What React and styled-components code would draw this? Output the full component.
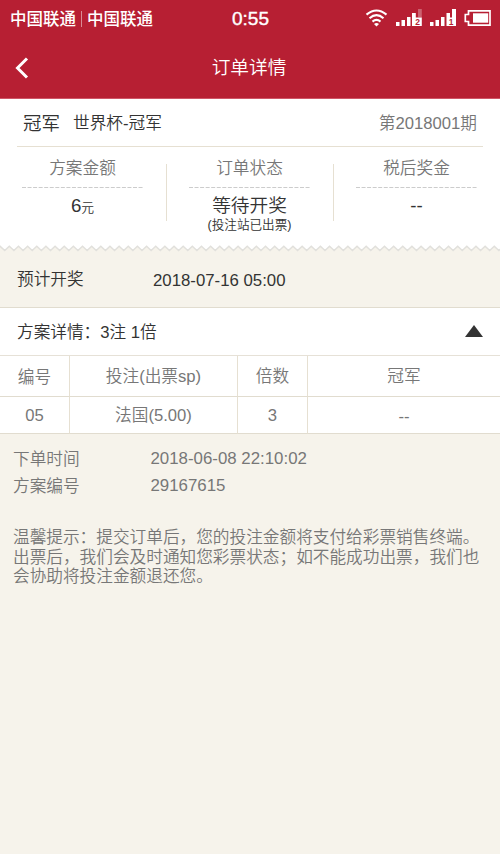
import React from 'react'
import styled, { createGlobalStyle } from 'styled-components';

const GlobalStyle = createGlobalStyle`
  * {
    box-sizing: border-box;
  }

  body {
    margin: 0;
    background: #f6f3eb;
    font-family: 'Liberation Sans', 'Noto Sans CJK SC', sans-serif;
    font-size: 16.67px;
    font-weight: 350;
    color: #333;
  }
`;

const Page = styled.div`
  width: 500px;
  height: 854px;
  overflow: hidden;
  background: #f6f3eb;
`;

const Header = styled.header`
  height: 99px;
  background: #b71f33;
  border-bottom: 1px solid #cf5567;
  color: #fff;
`;

const StatusBar = styled.div`
  display: grid;
  grid-template-columns: 1fr auto 1fr;
  align-items: center;
  height: 38px;
  padding: 0 9px 0 10px;
`;

const Carriers = styled.div`
  display: flex;
  align-items: center;
  font-size: 16.5px;
  font-weight: 500;
  line-height: 20px;
`;

const Carrier = styled.span`
  width: 66px;
  white-space: nowrap;
`;

const CarrierLine = styled.i`
  width: 1px;
  height: 16px;
  margin: 0 5px;
  background: #d98b96;
`;

const Clock = styled.div`
  font-size: 19px;
  line-height: 20px;
  -webkit-text-stroke: 0.4px #fff;
`;

const StatusIcons = styled.svg`
  justify-self: end;
  width: 126px;
  height: 38px;
`;

const NavBar = styled.nav`
  display: grid;
  grid-template-columns: 60px 1fr 60px;
  align-items: center;
  height: 60px;
`;

const BackIcon = styled.svg`
  width: 16px;
  height: 26px;
  margin-left: 14px;
`;

const Title = styled.h1`
  margin: 0 0 0 -2px;
  font-size: 18.7px;
  font-weight: 350;
  line-height: 24px;
  text-align: center;
`;

const Summary = styled.section`
  height: 146px;
  padding: 0 17px;
  background: #fff;
`;

const GameRow = styled.div`
  display: flex;
  align-items: center;
  height: 48px;
  padding: 0 6px 2px;
  border-bottom: 1px solid #e6e0d2;
`;

const GameName = styled.span`
  width: 50px;
  font-size: 18.5px;
`;

const GameType = styled.span`
  flex: 1;
`;

const Issue = styled.span`
  color: #777;
`;

const Stats = styled.div`
  display: grid;
  grid-template-columns: 150px 167px 149px;
  grid-template-rows: 57px;
  margin-top: 17px;
`;

const Stat = styled.div`
  padding: 0 ${props => props.$right || 23}px 0 ${props => props.$left || 0}px;
  border-right: ${props => props.$last ? '0' : '1px solid #e6e0d2'};
  text-align: center;
`;

const StatLabel = styled.div`
  height: 23px;
  margin: 0 -8px;
  color: #777;
  line-height: 9px;
`;

const StatDash = styled.svg`
  display: block;
  width: 121px;
  height: 1px;
`;

const StatValue = styled.div`
  height: 26px;
  margin: 0 -8px;
  padding-top: 6px;
  font-size: 18.7px;
  line-height: 24px;
  white-space: nowrap;
`;

const Unit = styled.small`
  font-size: 12.8px;
`;

const StatNote = styled.div`
  margin: 3px -8px 0;
  font-size: 12.6px;
  line-height: 16px;
  white-space: nowrap;
`;

const ZigZag = styled.svg`
  display: block;
  width: 500px;
  height: 7px;
`;

const DrawTime = styled.div`
  display: flex;
  align-items: center;
  height: 56px;
  padding-left: 17px;
  border-bottom: 1px solid #e1dccf;
`;

const DrawLabel = styled.span`
  width: 136px;
  padding-bottom: 3px;
`;

const DrawDate = styled.span`
  padding-top: 2px;
  font-size: 16.8px;
`;

const DetailBar = styled.div`
  display: flex;
  align-items: center;
  justify-content: space-between;
  height: 48px;
  padding: 0 17px 2px;
  border-bottom: 1px solid #e6e1d7;
  background: #fff;
`;

const Arrow = styled.svg`
  width: 18px;
  height: 12px;
`;

const BetTable = styled.div`
  display: grid;
  grid-template-columns: 70px 168px 70px 192px;
  grid-template-rows: 41px 37px;
  background: #fff;
  color: #777;
`;

const Cell = styled.div`
  display: flex;
  align-items: center;
  justify-content: center;
  padding-top: ${props => props.$drop || 0}px;
  padding-bottom: ${props => props.$lift || 0}px;
  border-right: ${props => props.$last ? '0' : '1px solid #e6e0d2'};
  border-bottom: 1px solid #e1dccf;
`;

const OrderInfo = styled.dl`
  display: grid;
  grid-template-columns: 137.500px 1fr;
  grid-auto-rows: 27px;
  align-items: center;
  margin: 11px 13px 0;
  color: #777;
`;

const Term = styled.dt`
  margin: 0;
  padding-bottom: 2px;
`;

const Info = styled.dd`
  margin: 0;
  font-size: 16.85px;
`;

const Tips = styled.p`
  margin: 29px 13px 0;
  color: #777;
  line-height: 19.5px;
  white-space: nowrap;
`;

const columns = [
    { name: '编号', drop: 0 },
    { name: '投注(出票sp)', lift: 3 },
    { name: '倍数', lift: 3 },
    { name: '冠军', lift: 3 },
];

const bet = [
    { value: '05', drop: 1 },
    { value: '法国(5.00)', lift: 3 },
    { value: '3', drop: 1 },
    { value: '--', drop: 3 },
];

function zigzagPoints() {
    const points = [];
    for (let x = -4.4; x < 510; x += 9.15) {
        points.push(`${x.toFixed(2)},5.5`);
        points.push(`${(x + 4.57).toFixed(2)},1.3`);
    }
    return points.join(' ');
}

function StatusGlyphs() {
    return (
        <StatusIcons viewBox="365 0 126 38" fill="#fff">
            <g fill="none" stroke="#fff" strokeWidth="2.1">
                <path d="M366.5 14.6 Q376.5 6.4 386.5 14.6" />
                <path d="M369.5 18.2 Q376.5 12 383.500 18.2" />
                <path d="M372.5 21.6 Q376.5 18 380.5 21.600" />
            </g>
            <path d="M374 24 Q376.5 22 379 24 L376.5 26.4Z" />
            <path d="M396 22h3.5v4H396zM401.500 20h3.5v6h-3.500zM407 17h3.500v9H407zM412 13h3.800v4.500h6V26H412z" />
            <path d="M418 9h3.800v8.500H418z" opacity="0.3" />
            <path d="M430 22h3.500v4H430zM435.500 20h3.500v6h-3.500zM441 17h3.500v9H441zM446.500 13h3.500v4.500h2V9h4v17h-9.500z" />
            <g fill="#b71f33" fontSize="8.5" fontWeight="bold" fontFamily="Liberation Sans, sans-serif">
                <text x="415.2" y="25.2">2</text>
                <text x="448.8" y="25.2">1</text>
            </g>
            <path d="M468.500 10.800H490v14.400H468.500V21.500H465.300v-7h3.200z" fill="none" stroke="#fff" strokeWidth="1.700" />
            <path d="M473 13.300h15.200v9.400H473z" />
        </StatusIcons>
    )
}

function Dash() {
    return (
        <StatDash>
            <path d="M0 0.5H121" stroke="#ccc" strokeDasharray="4 1.55" />
        </StatDash>
    )
}

function App() {
    return (
        <Page>
            <GlobalStyle />
            <Header>
                <StatusBar>
                    <Carriers>
                        <Carrier>中国联通</Carrier>
                        <CarrierLine />
                        <Carrier>中国联通</Carrier>
                    </Carriers>
                    <Clock>0:55</Clock>
                    <StatusGlyphs />
                </StatusBar>
                <NavBar>
                    <BackIcon viewBox="0 0 16 26">
                        <path d="M13 3.5 L3.500 13 L13 22.5" fill="none" stroke="#fff" strokeWidth="3" />
                    </BackIcon>
                    <Title>订单详情</Title>
                </NavBar>
            </Header>
            <Summary>
                <GameRow>
                    <GameName>冠军</GameName>
                    <GameType>世界杯-冠军</GameType>
                    <Issue>第2018001期</Issue>
                </GameRow>
                <Stats>
                    <Stat $left={5}>
                        <StatLabel>方案金额</StatLabel>
                        <Dash />
                        <StatValue>6<Unit>元</Unit></StatValue>
                    </Stat>
                    <Stat $left={22}>
                        <StatLabel>订单状态</StatLabel>
                        <Dash />
                        <StatValue>等待开奖</StatValue>
                        <StatNote>(投注站已出票)</StatNote>
                    </Stat>
                    <Stat $left={22} $right={6} $last>
                        <StatLabel>税后奖金</StatLabel>
                        <Dash />
                        <StatValue>--</StatValue>
                    </Stat>
                </Stats>
            </Summary>
            <ZigZag viewBox="0 0 500 7">
                <polygon points={`-10,0 ${zigzagPoints()} 520,0`} fill="#fff" />
                <polyline points={zigzagPoints()} fill="none" stroke="#e1e0dc" strokeWidth="1.5" />
            </ZigZag>
            <DrawTime>
                <DrawLabel>预计开奖</DrawLabel>
                <DrawDate>2018-07-16 05:00</DrawDate>
            </DrawTime>
            <DetailBar>
                <span>方案详情：3注 1倍</span>
                <Arrow viewBox="0 0 18 12"><path d="M0 12 L9 0 L18 12Z" fill="#333" /></Arrow>
            </DetailBar>
            <BetTable>
                {columns.map((col, i) => (
                    <Cell key={col.name} $drop={col.drop} $lift={col.lift} $last={i === 3}>{col.name}</Cell>
                ))}
                {bet.map((item, i) => (
                    <Cell key={item.value} $drop={item.drop} $lift={item.lift} $last={i === 3}>{item.value}</Cell>
                ))}
            </BetTable>
            <OrderInfo>
                <Term>下单时间</Term>
                <Info>2018-06-08 22:10:02</Info>
                <Term>方案编号</Term>
                <Info>29167615</Info>
            </OrderInfo>
            <Tips>
                温馨提示：提交订单后，您的投注金额将支付给彩票销售终端。<br />
                出票后，我们会及时通知您彩票状态；如不能成功出票，我们也<br />
                会协助将投注金额退还您。
            </Tips>
        </Page>
    )
}

export default App
